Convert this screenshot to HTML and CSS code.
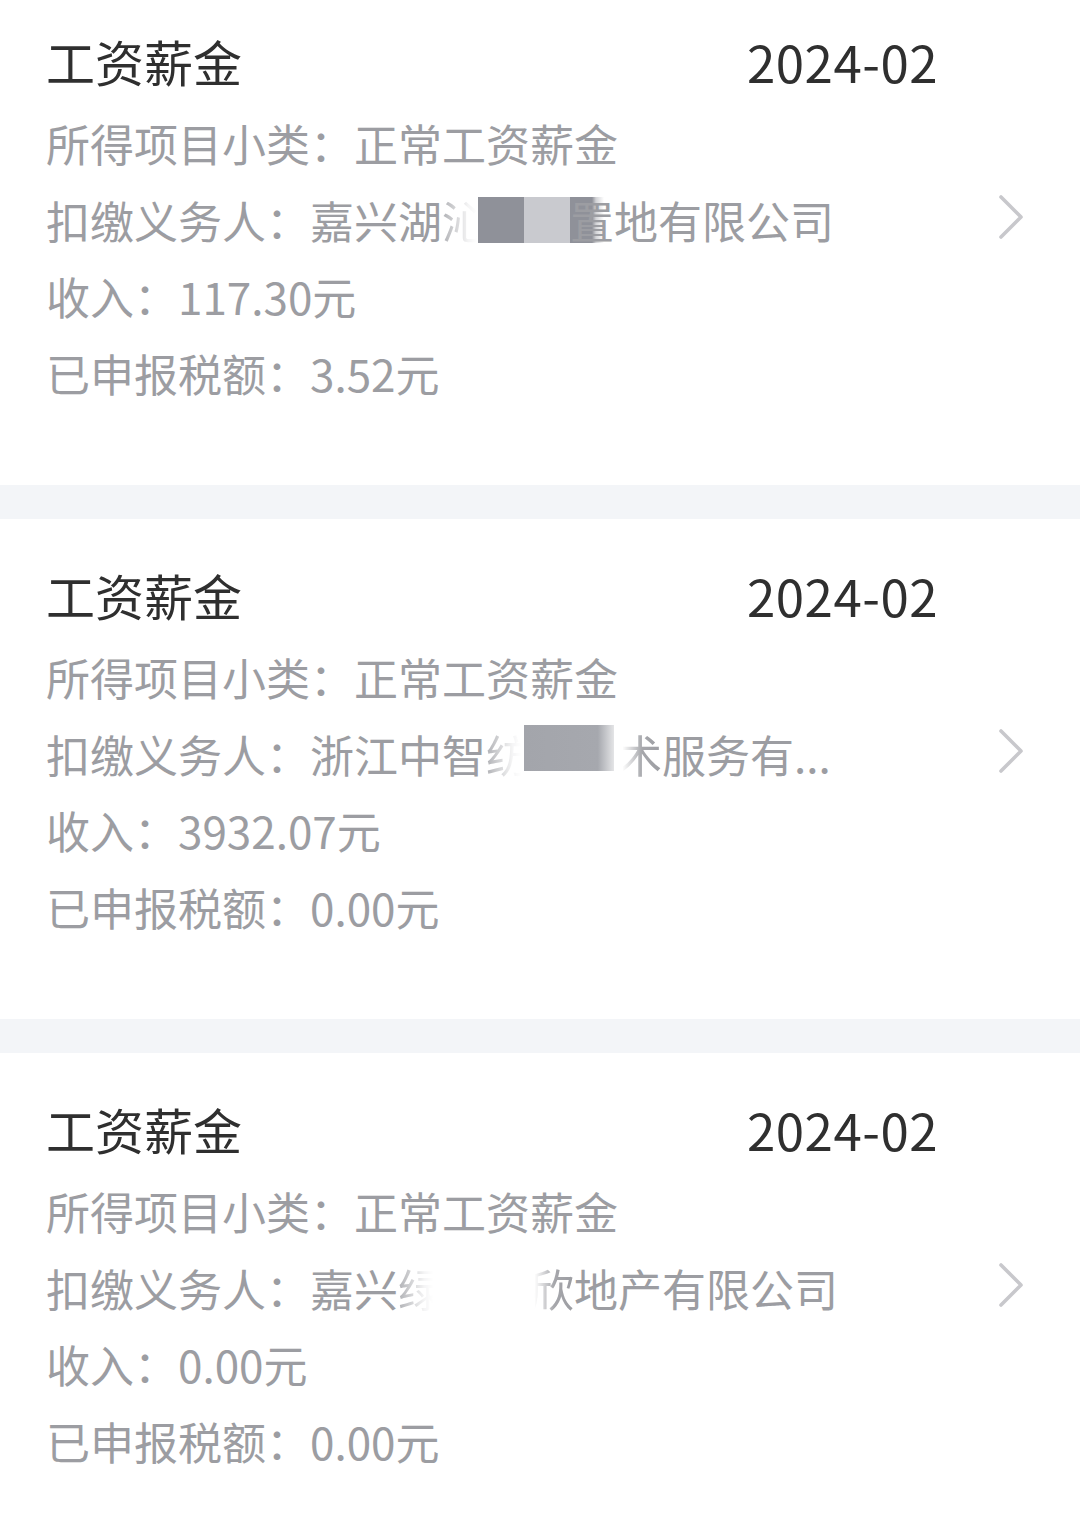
FILE: index.html
```html
<!DOCTYPE html>
<html lang="zh-CN">
<head>
<meta charset="utf-8">
<title>收入纳税明细</title>
<link rel="stylesheet" href="styles.css">
</head>
<body>
<div class="list">
  <div class="card">
    <div class="card-body">
      <div class="title-row">
        <span class="title">工资薪金</span>
        <span class="date">2024-02</span>
      </div>
      <div class="info">
        <div class="line">所得项目小类：正常工资薪金</div>
        <div class="line">扣缴义务人：嘉兴湖<span class="fade-r">沁</span><span class="redact r1"></span><span class="cover-l">置</span>地有限公司</div>
        <div class="line">收入：117.30元</div>
        <div class="line">已申报税额：3.52元</div>
      </div>
    </div>
    <div class="arrow">
      <svg viewBox="0 0 26 46" width="26" height="46"><polyline points="3,3 23,23 3,43" fill="none" stroke="#c8c8cc" stroke-width="3.6" stroke-linecap="round" stroke-linejoin="round"/></svg>
    </div>
  </div>

  <div class="card">
    <div class="card-body">
      <div class="title-row">
        <span class="title">工资薪金</span>
        <span class="date">2024-02</span>
      </div>
      <div class="info">
        <div class="line">所得项目小类：正常工资薪金</div>
        <div class="line">扣缴义务人：浙江中智<span class="fade-r">纺</span><span class="redact r2"></span><span class="fade-l">术</span>服务有...</div>
        <div class="line">收入：3932.07元</div>
        <div class="line">已申报税额：0.00元</div>
      </div>
    </div>
    <div class="arrow">
      <svg viewBox="0 0 26 46" width="26" height="46"><polyline points="3,3 23,23 3,43" fill="none" stroke="#c8c8cc" stroke-width="3.6" stroke-linecap="round" stroke-linejoin="round"/></svg>
    </div>
  </div>

  <div class="card">
    <div class="card-body">
      <div class="title-row">
        <span class="title">工资薪金</span>
        <span class="date">2024-02</span>
      </div>
      <div class="info">
        <div class="line">所得项目小类：正常工资薪金</div>
        <div class="line">扣缴义务人：嘉兴<span class="fade-r">绿</span><span class="blank"></span><span class="fade-l">欣</span>地产有限公司</div>
        <div class="line">收入：0.00元</div>
        <div class="line">已申报税额：0.00元</div>
      </div>
    </div>
    <div class="arrow">
      <svg viewBox="0 0 26 46" width="26" height="46"><polyline points="3,3 23,23 3,43" fill="none" stroke="#c8c8cc" stroke-width="3.6" stroke-linecap="round" stroke-linejoin="round"/></svg>
    </div>
  </div>
</div>
</body>
</html>
```
FILE: styles.css
```css
html, body {
  margin: 0;
  padding: 0;
  background: #ffffff;
}

body {
  font-family: "Noto Sans CJK SC", "Noto Sans", sans-serif;
  overflow: hidden;
}

.list {
  display: flex;
  flex-direction: column;
  gap: 34px;
  background: #f3f5f8;
  margin-top: -15px;
}

.card {
  display: flex;
  align-items: center;
  background: #ffffff;
  padding: 38px 56px 74px 46px;
}

.card-body {
  flex: 1;
  min-width: 0;
}

.title-row {
  display: flex;
  justify-content: space-between;
  align-items: center;
  height: 76px;
}

.title {
  font-size: 49px;
  color: #2f2f2f;
  line-height: 76px;
}

.date {
  font-size: 51px;
  color: #2f2f2f;
  line-height: 76px;
  letter-spacing: 0.5px;
}

.info {
  margin-top: 6px;
}

.line {
  font-size: 44px;
  line-height: 76.5px;
  color: #9c9da2;
  white-space: nowrap;
}

.arrow {
  width: 26px;
  margin-left: 60px;
  display: flex;
  align-items: center;
}

.arrow svg {
  display: block;
}

.fade-r {
  -webkit-mask-image: linear-gradient(to right, rgba(0,0,0,0.8) 0%, rgba(0,0,0,0.1) 60%, transparent 80%);
  mask-image: linear-gradient(to right, rgba(0,0,0,0.8) 0%, rgba(0,0,0,0.1) 60%, transparent 80%);
}

.fade-l {
  -webkit-mask-image: linear-gradient(to right, transparent 10%, rgba(0,0,0,0.9) 55%, #000 100%);
  mask-image: linear-gradient(to right, transparent 10%, rgba(0,0,0,0.9) 55%, #000 100%);
}

.redact {
  display: inline-block;
  height: 46px;
  vertical-align: -4px;
}

.r1 {
  width: 92px;
  margin-left: -8px;
  background: linear-gradient(to right, #8f9199 0 46px, #c9cacf 46px 92px);
}

.r2 {
  width: 90px;
  margin-left: -6px;
  margin-right: 4px;
  background: linear-gradient(to right, #a3a5ab 0%, #a6a8ae 82%, rgba(166,168,174,0.3) 100%);
  vertical-align: 2px;
}

.cover-l {
  background: linear-gradient(to right, #8f9199 0 22px, rgba(143,145,153,0.4) 26px, transparent 34px);
  background-size: 100% 46px;
  background-repeat: no-repeat;
  background-position: 0 50%;
}

.blank {
  display: inline-block;
  width: 88px;
}
```
